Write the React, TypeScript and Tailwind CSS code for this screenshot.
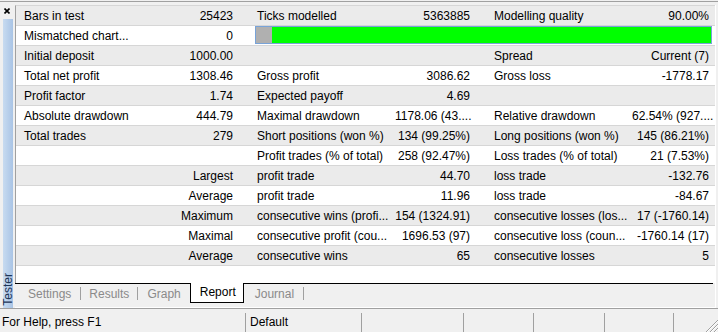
import React from 'react';

type Row = string[] | 'bar';

const rows: Row[] = [
  ['Bars in test', '25423', 'Ticks modelled', '5363885', 'Modelling quality', '90.00%'],
  'bar',
  ['Initial deposit', '1000.00', '', '', 'Spread', 'Current (7)'],
  ['Total net profit', '1308.46', 'Gross profit', '3086.62', 'Gross loss', '-1778.17'],
  ['Profit factor', '1.74', 'Expected payoff', '4.69', '', ''],
  ['Absolute drawdown', '444.79', 'Maximal drawdown', '1178.06 (43....', 'Relative drawdown', '62.54% (927....'],
  ['Total trades', '279', 'Short positions (won %)', '134 (99.25%)', 'Long positions (won %)', '145 (86.21%)'],
  ['', '', 'Profit trades (% of total)', '258 (92.47%)', 'Loss trades (% of total)', '21 (7.53%)'],
  ['', 'Largest', 'profit trade', '44.70', 'loss trade', '-132.76'],
  ['', 'Average', 'profit trade', '11.96', 'loss trade', '-84.67'],
  ['', 'Maximum', 'consecutive wins (profi...', '154 (1324.91)', 'consecutive losses (los...', '17 (-1760.14)'],
  ['', 'Maximal', 'consecutive profit (cou...', '1696.53 (97)', 'consecutive loss (coun...', '-1760.14 (17)'],
  ['', 'Average', 'consecutive wins', '65', 'consecutive losses', '5'],
];

function ReportRow({ row, index }: { row: Row; index: number }) {
  const bg = index % 2 === 0 ? 'bg-[#ebebeb]' : 'bg-white';

  if (row === 'bar') {
    return (
      <div className={`h-[20px] border-b border-[#d6d6d6] flex ${bg}`}>
        <div className="w-[114px] pl-2 leading-[21px] whitespace-nowrap">Mismatched chart...</div>
        <div className="w-[111px] pr-2 text-right leading-[21px]">0</div>
        {/* modelling quality bar */}
        <div className="ml-[14px] w-[457px] h-[18px] border border-[#78a3d8] flex">
          <div className="w-[16px] h-full bg-[#b0b0b0]" />
          <div className="flex-1 h-full bg-[#00ff00]" />
        </div>
      </div>
    );
  }

  return (
    <div
      className={`h-[20px] border-b border-[#d6d6d6] grid grid-cols-[114px_111px_154px_83px_154px_83px] leading-[21px] whitespace-nowrap ${bg}`}
    >
      <div className="pl-2">{row[0]}</div>
      <div className="pr-2 text-right">{row[1]}</div>
      <div className="pl-4">{row[2]}</div>
      <div className="pr-2 text-right">{row[3]}</div>
      <div className="pl-4">{row[4]}</div>
      <div className="pr-[6px] text-right">{row[5]}</div>
    </div>
  );
}

function Sep() {
  return <div className="w-px h-[13px] mt-[3px] bg-[#a0a0a0]" />;
}

export default function App() {
  return (
    <div className="w-[718px] h-[332px] bg-[#f0f0f0] text-black text-[12px] font-['Liberation_Sans',Arial,sans-serif] flex flex-col overflow-hidden">
      <div className="h-px mt-px bg-[#a0a0a0] shrink-0" />
      <div className="flex h-[306px] shrink-0">
        {/* docked window handle */}
        <div className="w-[15px] flex flex-col">
          <svg className="ml-[4px] mt-[6px]" width="6" height="6" viewBox="0 0 6 6">
            <path d="M0.5 0.5 L5.5 5.5 M5.5 0.5 L0.5 5.5" stroke="#000" strokeWidth="1.6" />
          </svg>
          <div className="ml-[3px] mt-[5px] w-[10px] flex-1 bg-gradient-to-r from-[#c8dbf0] to-[#a9c4e5] flex flex-col justify-end">
            <span className="[writing-mode:vertical-rl] rotate-180 text-[12px] leading-[10px] text-[#1d3557] mb-[2px]">
              Tester
            </span>
          </div>
        </div>

        {/* report panel */}
        <div className="w-[701px] mt-[3px] flex flex-col border-r border-b border-white">
          <div className="border-l border-t border-[#a0a0a0] border-t-[#d6d6d6]">
            {rows.map((row, i) => (
              <ReportRow key={i} row={row} index={i} />
            ))}
            <div className="h-[17px] bg-white" />
          </div>
          <div className="h-px bg-black mr-[2px]" />
          <div className="flex h-[20px] text-[#8a8a8a]">
            <span className="ml-[13px] mr-[9px] leading-[20px]">Settings</span>
            <Sep />
            <span className="ml-[8px] mr-[8px] leading-[20px]">Results</span>
            <Sep />
            <span className="ml-[9px] leading-[20px]">Graph</span>
            <div className="ml-[9px] -mt-px h-[20px] bg-white border-x border-b border-black pl-[9px] pr-[7px] leading-[19px] text-black">
              Report
            </div>
            <span className="ml-[11px] mr-[9px] leading-[20px]">Journal</span>
            <Sep />
          </div>
        </div>
      </div>

      {/* status bar */}
      <div className="h-[24px] shrink-0 border-t border-[#a0a0a0] flex overflow-hidden">
        <div className="w-[245px] pl-[2px] pt-[3px] leading-[20px]">For Help, press F1</div>
        <div className="w-[116px] mt-[4px] border-l border-[#a0a0a0] pl-[4px] leading-[19px]">Default</div>
        <div className="w-[102px] mt-[4px] border-l border-[#a0a0a0]" />
        <div className="w-[70px] mt-[4px] border-l border-[#a0a0a0]" />
        <div className="w-[71px] mt-[4px] border-l border-[#a0a0a0]" />
        <div className="w-[69px] mt-[4px] border-l border-[#a0a0a0]" />
        <div className="w-[28px] mt-[4px] border-l border-[#a0a0a0]" />
        <div className="flex-1 flex items-end justify-end">
          <svg width="15" height="15" viewBox="0 0 15 15">
            <path d="M3 15 L15 3 M7 15 L15 7 M11 15 L15 11" stroke="#a0a0a0" strokeWidth="1" />
            <path d="M4 15 L15 4 M8 15 L15 8 M12 15 L15 12" stroke="#ffffff" strokeWidth="1" />
          </svg>
        </div>
      </div>
    </div>
  );
}
